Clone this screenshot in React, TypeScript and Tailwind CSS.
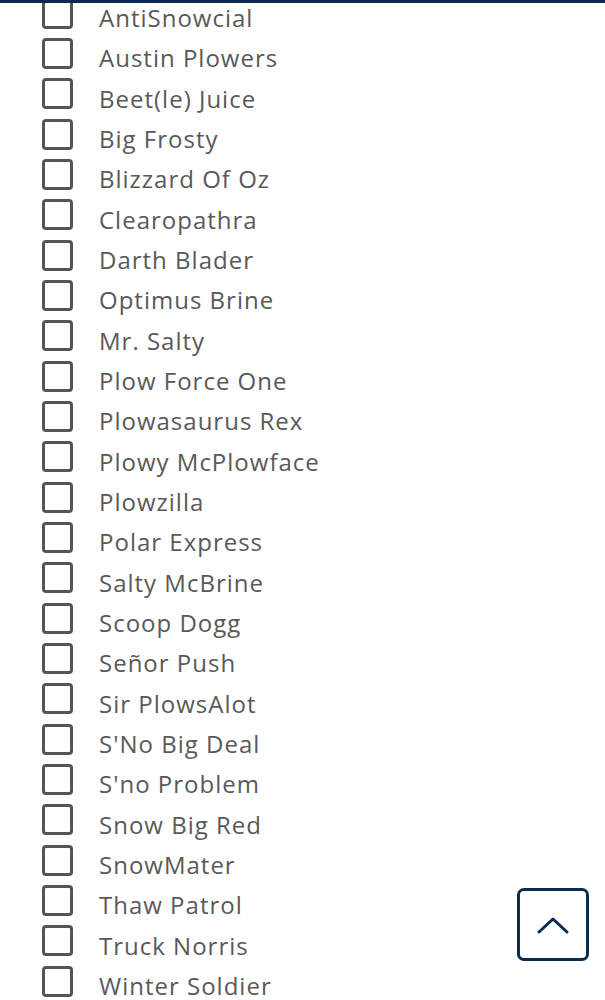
import React from "react";

const names = [
  "AntiSnowcial",
  "Austin Plowers",
  "Beet(le) Juice",
  "Big Frosty",
  "Blizzard Of Oz",
  "Clearopathra",
  "Darth Blader",
  "Optimus Brine",
  "Mr. Salty",
  "Plow Force One",
  "Plowasaurus Rex",
  "Plowy McPlowface",
  "Plowzilla",
  "Polar Express",
  "Salty McBrine",
  "Scoop Dogg",
  "Señor Push",
  "Sir PlowsAlot",
  "S'No Big Deal",
  "S'no Problem",
  "Snow Big Red",
  "SnowMater",
  "Thaw Patrol",
  "Truck Norris",
  "Winter Soldier",
];

export default function App() {
  return (
    <div className="relative w-[605px] h-[1000px] overflow-hidden bg-white" style={{ fontFamily: '"Open Sans", "Noto Sans", sans-serif' }}>
      <div className="absolute top-0 left-0 right-0 h-[3px] bg-[#0b2a4f] z-10" />
      <ul className="mt-[-2px] pl-[42px]">
        {names.map((n) => (
          <li key={n} className="h-[40.33px] flex items-center">
            <span className="w-[31px] h-[31px] border-[3px] border-[#555] rounded-[4px] shrink-0 mt-[-10px]" />
            <span className="ml-[26px] text-[24px] leading-[30px] text-[#595959] tracking-[1px]">{n}</span>
          </li>
        ))}
      </ul>
      <button className="absolute left-[517px] top-[888px] w-[72px] h-[73px] border-[3px] border-[#0b2a4f] rounded-[7px] flex items-center justify-center bg-white">
        <svg width="34" height="20" viewBox="0 0 34 20" fill="none" stroke="#0b2a4f" strokeWidth="3" strokeLinecap="round" strokeLinejoin="round">
          <path d="M3 17 L17 4 L31 17" />
        </svg>
      </button>
    </div>
  );
}
